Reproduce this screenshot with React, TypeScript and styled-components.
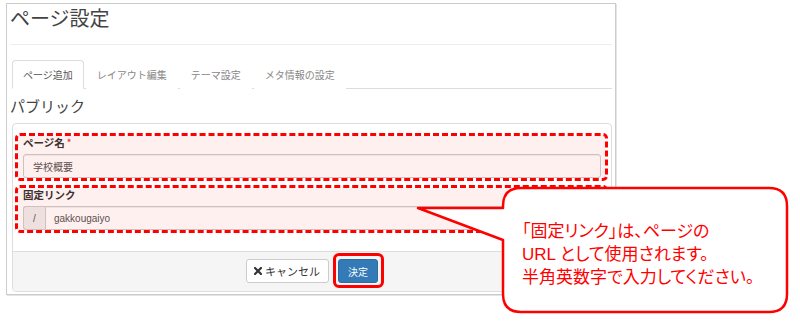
import React from "react";
import styled, { createGlobalStyle } from "styled-components";

const GlobalStyle = createGlobalStyle`
    html, body {
        margin: 0;
        padding: 0;
        background: #fff;
    }
    body {
        font-family: "Noto Sans CJK JP", "Liberation Sans", sans-serif;
        color: #333;
    }
    * {
        box-sizing: border-box;
    }
`;

const Page = styled.div`
    position: relative;
    width: 800px;
    height: 323px;
    overflow: hidden;
    padding: 3px 0 0 6px;
`;

const Panel = styled.div`
    width: 610px;
    border: 1px solid #ccc;
    box-shadow: 1px 1px 0 #e4e4e4;
    padding: 0 3px 2px;
    display: flex;
    flex-direction: column;
`;

const Title = styled.h1`
    margin: 0;
    font-size: 20px;
    font-weight: 400;
    line-height: 28px;
    color: #444;
    padding-bottom: 12px;
    border-bottom: 1px solid #eee;
`;

const TabList = styled.ul`
    list-style: none;
    margin: 15px 0 0 2px;
    padding: 0;
    height: 29px;
    display: flex;
    border-bottom: 1px solid #ddd;
`;

const Tab = styled.li<{ $active?: boolean }>`
    height: 29px;
    padding: 0 10px;
    margin-right: 2px;
    display: flex;
    align-items: center;
    font-size: 10px;
    color: ${props => props.$active ? "#555" : "#888"};
    border: 1px solid ${props => props.$active ? "#ddd" : "transparent"};
    border-bottom-color: ${props => props.$active ? "#fff" : "transparent"};
    border-radius: 4px 4px 0 0;
    background: #fff;
`;

const Heading = styled.h2`
    margin: 7px 0 0;
    font-size: 15px;
    font-weight: 400;
    line-height: 20px;
    color: #444;
`;

const FormPanel = styled.div`
    margin: 7px 0 0 2px;
    border: 1px solid #ddd;
    border-radius: 4px;
    overflow: hidden;
`;

const FormBody = styled.div`
    padding: 9px 3px 18px 2px;
    display: flex;
    flex-direction: column;
    gap: 4px;
`;

const FieldGroup = styled.div<{ $marked?: boolean }>`
    position: relative;
    padding: 0 4px 0 5px;
    border: 3px dashed ${props => props.$marked ? "#ff0000" : "transparent"};
    border-radius: 5px;

    &::after {
        content: "";
        position: absolute;
        inset: 0;
        pointer-events: none;
        background: ${props => props.$marked ? "rgba(255, 0, 0, 0.06)" : "transparent"};
    }
`;

const Label = styled.label`
    display: block;
    font-size: 10.5px;
    font-weight: 700;
    line-height: 13px;
    margin-bottom: 5px;
    color: #333;
`;

const Required = styled.span`
    color: #e04040;
    font-size: 9px;
    vertical-align: top;
    margin-left: 2px;
`;

const InputRow = styled.div`
    display: flex;
`;

const Addon = styled.span`
    width: 22px;
    height: 24px;
    display: flex;
    align-items: center;
    justify-content: center;
    font-family: "Liberation Sans", sans-serif;
    font-size: 10px;
    color: #555;
    background: #eee;
    border: 1px solid #ccc;
    border-right: 0;
    border-radius: 3px 0 0 3px;
`;

const Input = styled.div<{ $attached?: boolean }>`
    flex: 1;
    height: 24px;
    display: flex;
    align-items: center;
    padding: 0 ${props => props.$attached ? "8px" : "9px"};
    font-family: "Liberation Sans", "Noto Sans CJK JP", sans-serif;
    font-size: 10px;
    color: #555;
    background: #fff;
    border: 1px solid #ccc;
    border-radius: ${props => props.$attached ? "0 3px 3px 0" : "3px"};
    box-shadow: inset 0 1px 1px rgba(0, 0, 0, 0.06);
`;

const Footer = styled.div`
    display: flex;
    justify-content: center;
    gap: 9px;
    padding: 7px 0 8px;
    background: #f5f5f5;
    border-top: 1px solid #ddd;
`;

const Button = styled.button<{ $primary?: boolean }>`
    height: 24px;
    display: flex;
    align-items: center;
    gap: 3px;
    padding: ${props => props.$primary ? "0 9px" : "0 8px 0 7px"};
    font-family: "Noto Sans CJK JP", sans-serif;
    font-size: ${props => props.$primary ? "10px" : "11px"};
    color: ${props => props.$primary ? "#fff" : "#333"};
    background: ${props => props.$primary ? "#337ab7" : "#fff"};
    border: 1px solid ${props => props.$primary ? "#2e6da4" : "#ccc"};
    border-radius: 3px;
`;

const Marked = styled.span`
    position: relative;
    display: flex;

    &::after {
        content: "";
        position: absolute;
        inset: -6px -6px -5px -5px;
        border: 3px solid #ff0000;
        border-radius: 6px;
        pointer-events: none;
    }
`;

const Callout = styled.div`
    position: absolute;
    left: 410px;
    top: 184px;
    width: 385px;
    height: 135px;
    padding: 36px 0 0 112px;
`;

const CalloutShape = styled.svg`
    position: absolute;
    inset: 0;
    width: 100%;
    height: 100%;
`;

const CalloutText = styled.p`
    position: relative;
    margin: 0;
    font-family: "Liberation Sans", "Noto Sans CJK JP", sans-serif;
    font-feature-settings: "palt";
    font-size: 17px;
    line-height: 23px;
    color: #ff0000;
    white-space: nowrap;
`;

function CloseIcon() {
    return (
        <svg width="8" height="8" viewBox="0 0 8 8">
            <path d="M1 1 L7 7 M7 1 L1 7" stroke="#333" strokeWidth="2.2" strokeLinecap="square" />
        </svg>
    );
}

const tabs = ["ページ追加", "レイアウト編集", "テーマ設定", "メタ情報の設定"];

export default function App() {
    return (
        <Page>
            <GlobalStyle />
            <Panel>
                <Title>ページ設定</Title>

                <TabList>
                    {tabs.map((tab, index) => (
                        <Tab key={tab} $active={index === 0}>{tab}</Tab>
                    ))}
                </TabList>

                <Heading>パブリック</Heading>

                <FormPanel>
                    <FormBody>
                        <FieldGroup $marked>
                            <Label>ページ名<Required>*</Required></Label>
                            <Input>学校概要</Input>
                        </FieldGroup>
                        <FieldGroup $marked>
                            <Label>固定リンク</Label>
                            <InputRow>
                                <Addon>/</Addon>
                                <Input $attached>gakkougaiyo</Input>
                            </InputRow>
                        </FieldGroup>
                    </FormBody>

                    <Footer>
                        <Button><CloseIcon />キャンセル</Button>
                        <Marked>
                            <Button $primary>決定</Button>
                        </Marked>
                    </Footer>
                </FormPanel>
            </Panel>

            <Callout>
                <CalloutShape viewBox="410 184 385 135">
                    <path
                        d="M503 208 L418 208 L503 240 L503 294 Q503 312 521 312 L769 312 Q787 312 787 294 L787 206 Q787 188 769 188 L521 188 Q503 188 503 206 Z"
                        fill="#fff"
                        stroke="#ff0000"
                        strokeWidth="2.5"
                        strokeLinejoin="round"
                    />
                </CalloutShape>
                <CalloutText>
                    「固定リンク」は、ページの<br />
                    URL として使用されます。<br />
                    半角英数字で入力してください。
                </CalloutText>
            </Callout>
        </Page>
    );
}
